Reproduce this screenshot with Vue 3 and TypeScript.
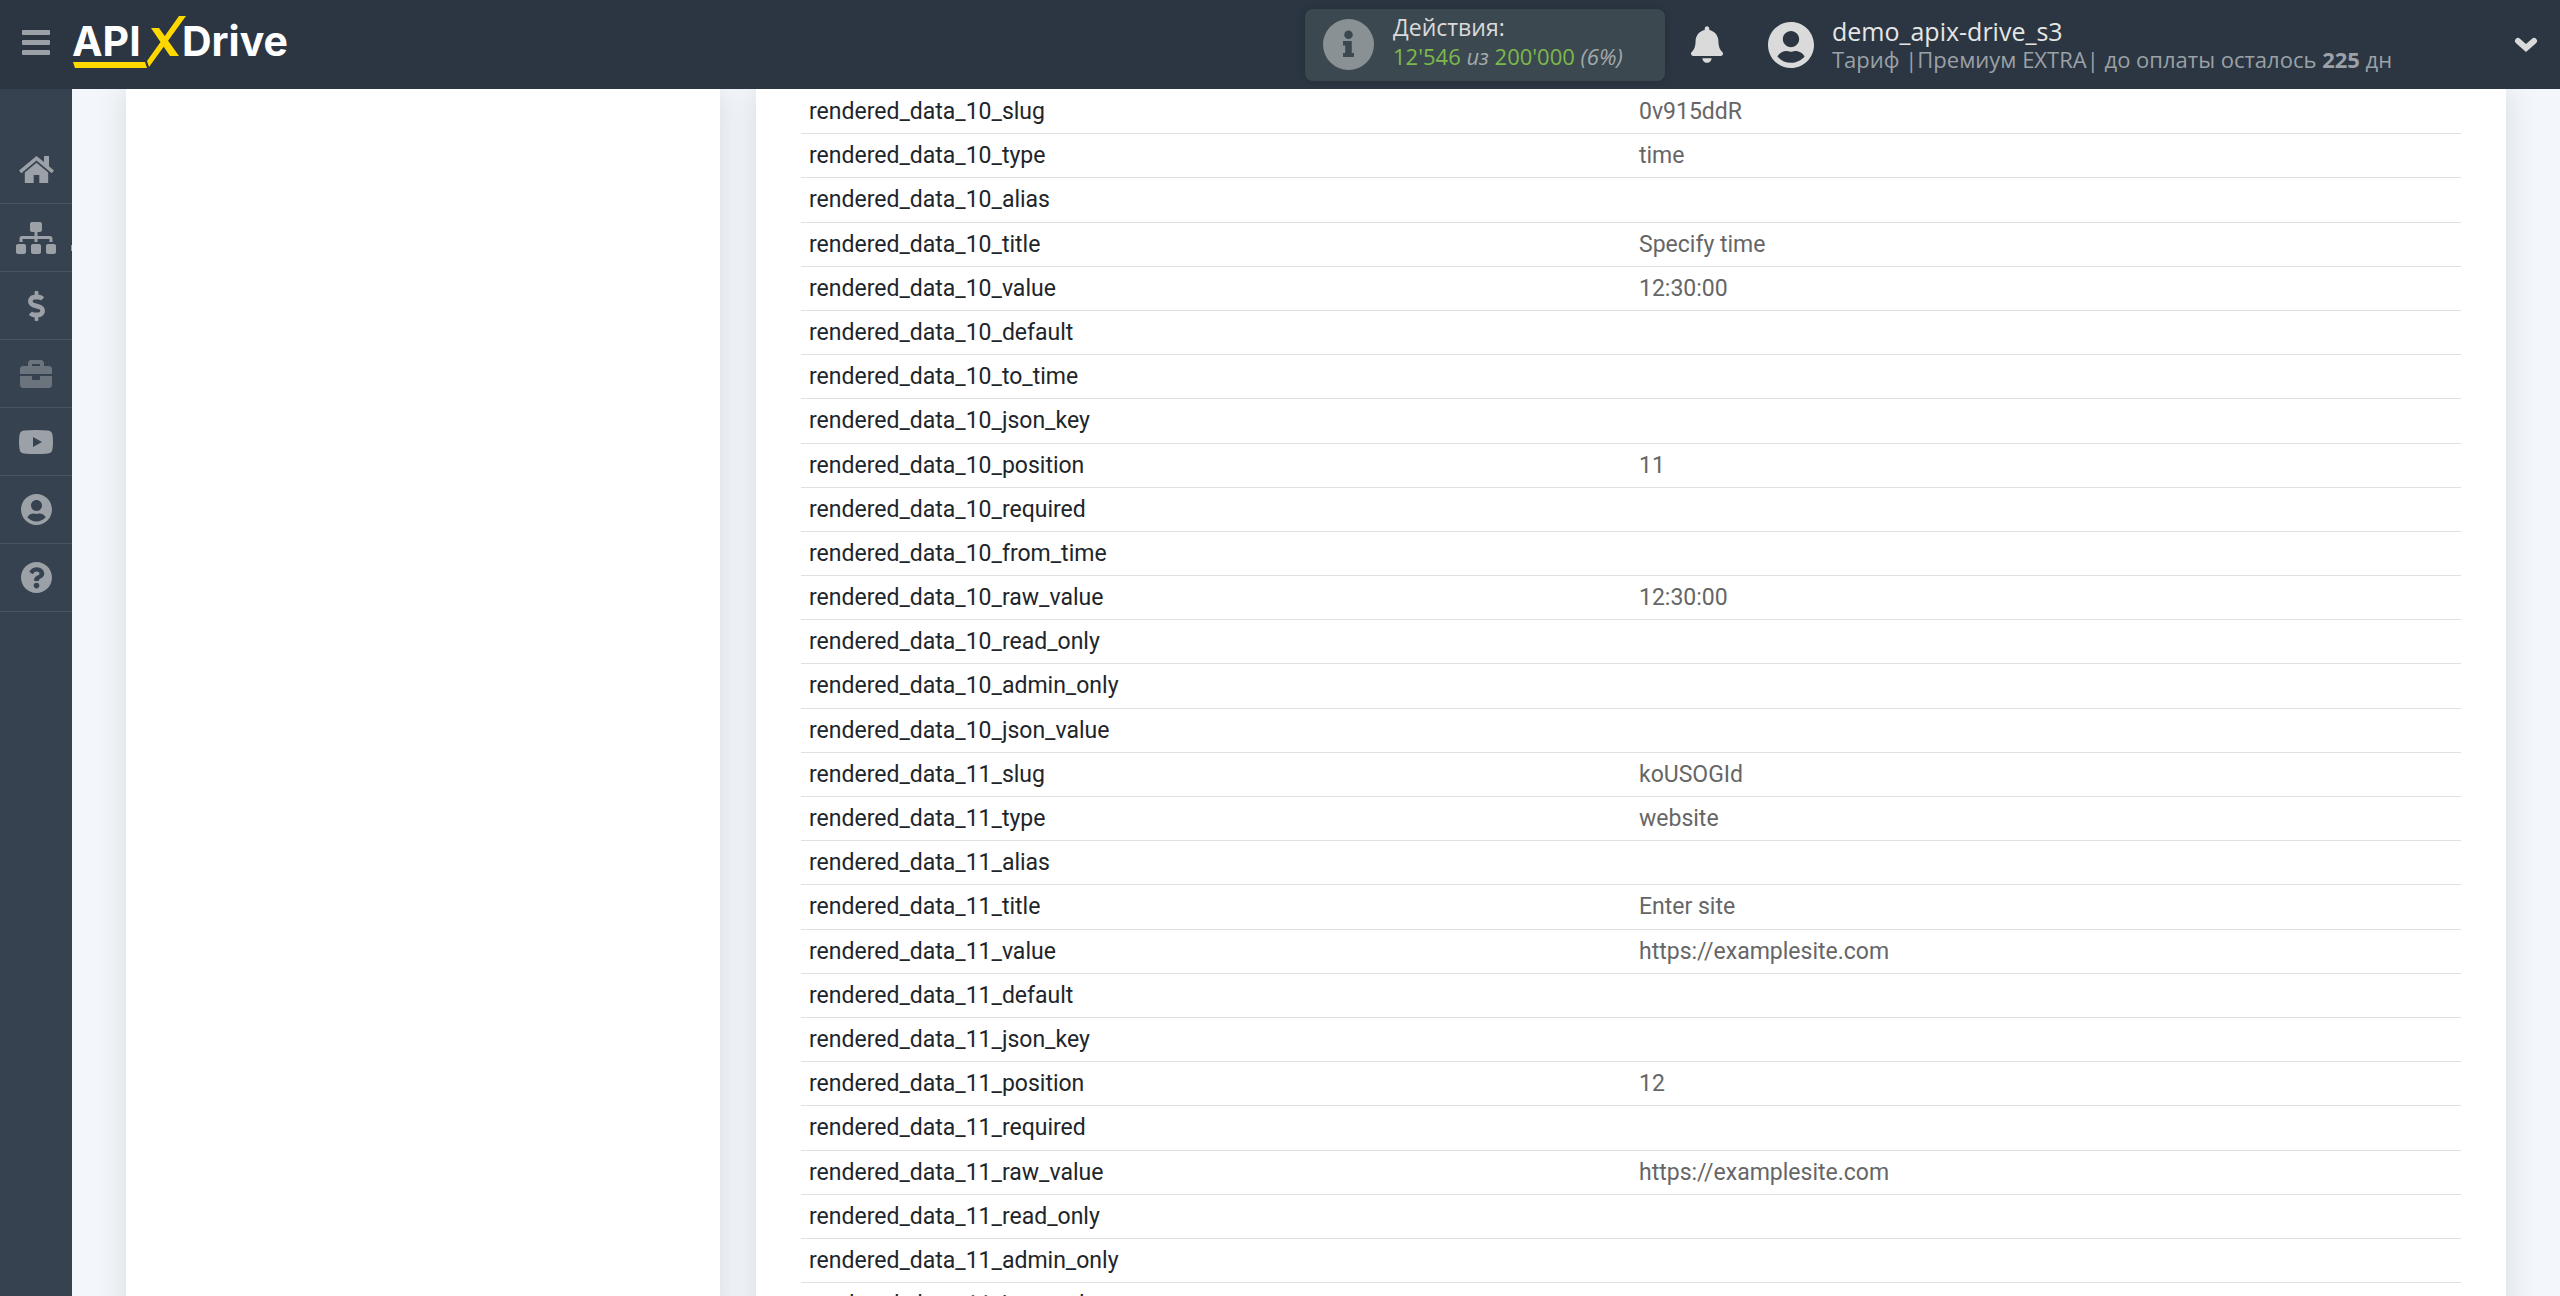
<script setup lang="ts">
interface Row {
  name: string
  value: string
}

const field = (group: number, keys: [string, string?][]): Row[] =>
  keys.map(([key, value = '']) => ({ name: `rendered_data_${group}_${key}`, value }))

const rows: Row[] = [
  ...field(10, [
    ['slug', '0v915ddR'],
    ['type', 'time'],
    ['alias'],
    ['title', 'Specify time'],
    ['value', '12:30:00'],
    ['default'],
    ['to_time'],
    ['json_key'],
    ['position', '11'],
    ['required'],
    ['from_time'],
    ['raw_value', '12:30:00'],
    ['read_only'],
    ['admin_only'],
    ['json_value'],
  ]),
  ...field(11, [
    ['slug', 'koUSOGId'],
    ['type', 'website'],
    ['alias'],
    ['title', 'Enter site'],
    ['value', 'https://examplesite.com'],
    ['default'],
    ['json_key'],
    ['position', '12'],
    ['required'],
    ['raw_value', 'https://examplesite.com'],
    ['read_only'],
    ['admin_only'],
    ['json_value'],
  ]),
]

interface NavItem {
  label: string
  box: string
  width: number
  height: number
  path: string
  dim?: boolean
  more?: boolean
}

const userPath =
  'M248 8C111 8 0 119 0 256s111 248 248 248 248-111 248-248S385 8 248 8zm0 96c48.600 0 88 39.400 88 88s-39.400 88-88 88-88-39.400-88-88 39.400-88 88-88zm0 344c-58.700 0-111.300-26.600-146.500-68.200 18.800-35.400 55.600-59.800 98.500-59.800 2.400 0 4.800.4 7.100 1.100 13 4.200 26.600 6.900 40.900 6.900 14.300 0 28-2.700 40.900-6.900 2.300-.7 4.700-1.100 7.100-1.100 42.900 0 79.700 24.400 98.500 59.800C359.300 421.400 306.700 448 248 448z'

const nav: NavItem[] = [
  {
    label: 'Главная', box: '0 0 35 27', width: 35, height: 27,
    path: 'M17.500 0 0 14.500l2.300 2.800L17.500 4.600l15.200 12.700 2.300-2.800-5-4.200V0h-5v6zM17.500 6.800 5.800 16.500V27h8.900v-8h5.600v8h8.900V16.500z',
  },
  {
    label: 'Связи', box: '0 0 640 512', width: 40, height: 32, more: true,
    path: 'M128 352H32c-17.670 0-32 14.330-32 32v96c0 17.670 14.330 32 32 32h96c17.670 0 32-14.330 32-32v-96c0-17.670-14.330-32-32-32zm-24-80h192v48h48v-48h192v48h48v-57.590c0-21.170-17.230-38.410-38.410-38.410H344v-64h40c17.670 0 32-14.330 32-32V32c0-17.670-14.330-32-32-32H256c-17.670 0-32 14.330-32 32v96c0 17.670 14.330 32 32 32h40v64H94.410C73.230 224 56 241.230 56 262.410V320h48v-48zm264 80h-96c-17.670 0-32 14.330-32 32v96c0 17.670 14.330 32 32 32h96c17.670 0 32-14.330 32-32v-96c0-17.670-14.330-32-32-32zm240 0h-96c-17.670 0-32 14.330-32 32v96c0 17.670 14.330 32 32 32h96c17.670 0 32-14.330 32-32v-96c0-17.670-14.330-32-32-32z',
  },
  {
    label: 'Оплата', box: '0 0 288 512', width: 17, height: 30,
    path: 'M209.200 233.400l-108-31.600C88.700 198.200 80 186.500 80 173.500c0-16.300 13.200-29.500 29.500-29.500h66.300c12.200 0 24.200 3.700 34.200 10.500 6.100 4.100 14.300 3.100 19.500-2l34.800-34c7.100-6.900 6.100-18.400-1.800-24.500C238 74.800 207.400 64.100 176 64V16c0-8.800-7.200-16-16-16h-32c-8.800 0-16 7.200-16 16v48h-2.500C45.800 64-5.400 118.700.5 183.600c4.200 46.100 39.400 83.600 83.800 96.600l102.500 30c12.500 3.700 21.200 15.300 21.200 28.300 0 16.300-13.200 29.500-29.500 29.500h-66.300C100 368 88 364.300 78 357.500c-6.100-4.100-14.300-3.100-19.500 2l-34.800 34c-7.100 6.900-6.100 18.400 1.800 24.500 24.500 19.200 55.100 29.900 86.500 30v48c0 8.800 7.200 16 16 16h32c8.800 0 16-7.200 16-16v-48.200c46.600-.9 90.300-28.600 105.700-72.700 21.500-61.600-14.600-124.800-72.500-141.700z',
  },
  {
    label: 'Бизнес', box: '0 0 512 512', width: 32, height: 32, dim: true,
    path: 'M320 336c0 8.840-7.160 16-16 16h-96c-8.840 0-16-7.160-16-16v-48H0v144c0 25.600 22.400 48 48 48h416c25.600 0 48-22.400 48-48V288H320v48zm144-208h-80V80c0-25.600-22.400-48-48-48H176c-25.600 0-48 22.400-48 48v48H48c-25.600 0-48 22.400-48 48v80h512v-80c0-25.600-22.400-48-48-48zm-144 0H192V96h128v32z',
  },
  {
    label: 'Видео', box: '0 0 34 24', width: 34, height: 24,
    path: 'M5 .5Q17-.5 29 .5 33 .8 33.500 5q1 7 0 14-.5 4.200-4.500 4.500-12 1-24 0Q1 23.200.500 19q-1-7 0-14Q1 .8 5 .5zM14 7v10l9-5z',
  },
  { label: 'Профиль', box: '0 8 496 496', width: 31, height: 31, path: userPath },
  {
    label: 'Помощь', box: '0 8 496 496', width: 31, height: 31,
    path: 'M496 256c0 137-111 248-248 248S0 393 0 256 111 8 248 8s248 111 248 248zM255.700 90c-54.500 0-89.200 23-116.500 63.800-3.500 5.300-2.400 12.400 2.700 16.300l34.700 26.300c5.200 3.900 12.600 3 16.700-2.100 17.900-22.700 30.100-35.800 57.300-35.800 20.400 0 45.700 13.100 45.700 33 0 15-12.400 22.700-32.500 34C240.300 238.600 209 255 209 296v4c0 6.600 5.400 12 12 12h56c6.600 0 12-5.400 12-12v-1.300c0-28.500 83.200-29.600 83.200-106.700 0-58-60.200-102-116.500-102zM248 338c-25.400 0-46 20.600-46 46s20.600 46 46 46 46-20.600 46-46-20.600-46-46-46z',
  },
]
</script>

<template>
  <div class="app">
    <header class="topbar">
      <button class="menu" type="button" aria-label="Меню"><i></i><i></i><i></i></button>
      <a class="logo" href="#" aria-label="APIXDrive">
        <svg width="224" height="56" viewBox="0 0 224 56">
          <g fill="#fff" font-family="Inter, sans-serif" font-weight="700" font-size="41">
            <text x="0" y="41">API</text>
            <text x="110" y="41">Drive</text>
          </g>
          <path fill="#ffd800" d="M1 47h72l2 6H3zM107 1h7L77 52l-2-6zM79 13h8l20 28h-9z" />
        </svg>
      </a>

      <div class="usage">
        <svg width="51" height="51" viewBox="0 0 51 51">
          <path fill="#899195" fill-rule="evenodd" d="M25.500 0a25.500 25.500 0 1 1 0 51 25.500 25.500 0 0 1 0-51zm0 11.500a4.300 4.300 0 1 0 0 8.600 4.300 4.300 0 0 0 0-8.600zM20 22v4.500h2.200V34H20v4h11v-4h-2.200V22z" />
        </svg>
        <div class="usage-text">
          <span class="usage-title">Действия:</span>
          <span class="usage-count"><b>12'546</b> <em>из</em> <b>200'000</b> <em>(6%)</em></span>
        </div>
      </div>

      <button class="bell" type="button" aria-label="Уведомления">
        <svg width="32" height="37" viewBox="0 0 448 512">
          <path fill="currentColor" d="M224 512c35.300 0 63.900-28.700 63.900-64H160.100c0 35.300 28.600 64 63.900 64zm215.400-149.700c-19.300-20.800-55.500-52-55.500-154.300 0-77.700-54.500-139.900-127.900-155.200V32c0-17.700-14.300-32-32-32s-32 14.300-32 32v20.800C118.600 68.100 64.100 130.300 64.100 208c0 102.300-36.200 133.500-55.500 154.300-6 6.400-8.700 14.100-8.600 21.700.1 16.400 13 32 32.100 32h383.800c19.100 0 32-15.600 32.100-32 .1-7.600-2.600-15.300-8.600-21.700z" />
        </svg>
      </button>

      <button class="account" type="button">
        <svg width="46" height="46" viewBox="0 8 496 496"><path fill="currentColor" :d="userPath" /></svg>
        <span class="account-text">
          <span class="account-name">demo_apix-drive_s3</span>
          <span class="account-plan">Тариф |Премиум EXTRA| до оплаты осталось <b>225</b> дн</span>
        </span>
        <svg class="chevron" width="24" height="16" viewBox="0 0 24 16">
          <path fill="none" stroke="currentColor" stroke-width="6" stroke-linecap="round" d="m4 4 8 7 8-7" />
        </svg>
      </button>
    </header>

    <div class="body">
      <nav class="sidebar">
        <a v-for="item in nav" :key="item.label" href="#" :aria-label="item.label" :class="{ dim: item.dim, more: item.more }">
          <svg :width="item.width" :height="item.height" :viewBox="item.box">
            <path fill="currentColor" fill-rule="evenodd" :d="item.path" />
          </svg>
        </a>
      </nav>

      <main class="content">
        <aside class="panel"></aside>
        <section class="panel data">
          <table>
            <tbody>
              <tr v-for="row in rows" :key="row.name">
                <th scope="row">{{ row.name }}</th>
                <td>{{ row.value }}</td>
              </tr>
            </tbody>
          </table>
        </section>
      </main>
    </div>
  </div>
</template>

<style>
body {
  margin: 0;
}
</style>

<style scoped>
.app {
  display: flex;
  flex-direction: column;
  height: 100vh;
  overflow: hidden;
  background: #f3f6fb;
  font-family: "Open Sans", "Noto Sans", sans-serif;
}

button {
  padding: 0;
  border: 0;
  background: none;
  color: inherit;
  font: inherit;
  text-align: left;
}

svg {
  display: block;
  flex: none;
}

.topbar {
  display: flex;
  align-items: center;
  flex: none;
  height: 89px;
  background: #2b3642;
  color: #dadada;
}

.menu {
  display: flex;
  flex-direction: column;
  gap: 5px;
  margin: 0 22px;
  padding-bottom: 5px;
}

.menu i {
  width: 28px;
  height: 5px;
  border-radius: 1px;
  background: #9ba1a6;
}

.logo {
  padding-bottom: 3px;
}

.usage {
  display: flex;
  align-items: center;
  gap: 19px;
  box-sizing: border-box;
  width: 360px;
  height: 72px;
  margin-left: auto;
  padding-left: 18px;
  border-radius: 8px;
  background: #3c4850;
  box-shadow: 0 0 8px rgba(0, 0, 0, 0.15);
}

.usage-text {
  display: flex;
  flex-direction: column;
  padding-bottom: 6px;
  line-height: 29px;
  white-space: nowrap;
}

.usage-title {
  font-size: 23px;
}

.usage-count {
  font-size: 22px;
}

.usage-count b {
  color: #7cb84c;
  font-weight: 400;
}

.usage-count em {
  color: #a3a8ab;
}

.bell {
  margin: 0 45px 0 26px;
}

.account {
  display: flex;
  align-items: center;
  gap: 18px;
  box-sizing: border-box;
  width: 792px;
  padding-right: 22px;
}

.account-text {
  display: flex;
  flex-direction: column;
  line-height: 28px;
  white-space: nowrap;
}

.account-name {
  color: #e6e6e6;
  font-size: 25px;
}

.account-plan {
  color: #9ba1a6;
  font-size: 22px;
}

.chevron {
  margin-left: auto;
}

.body {
  display: flex;
  flex: 1;
  min-height: 0;
}

.sidebar {
  flex: none;
  width: 72px;
  padding-top: 47px;
  background: #36424f;
}

.sidebar a {
  display: flex;
  align-items: center;
  justify-content: center;
  position: relative;
  height: 67px;
  border-bottom: 1px solid #4a5560;
  color: #9ba1a6;
}

.sidebar a.dim {
  color: #6b747d;
}

.sidebar a.more::after {
  content: "";
  position: absolute;
  right: 0;
  bottom: 20px;
  width: 1px;
  height: 6px;
  background: #9ba1a6;
}

.content {
  display: grid;
  grid-template-columns: 297fr 875fr;
  gap: 36px;
  flex: 1;
  min-width: 0;
  padding: 0 54px;
  overflow: hidden;
}

.panel {
  background: #fff;
  box-shadow: 0 0 30px rgba(0, 0, 0, 0.12);
}

.data {
  padding: 1px 45px 0;
}

table {
  width: 100%;
  border-collapse: separate;
  border-spacing: 0;
  table-layout: fixed;
  font-family: Roboto, sans-serif;
  font-size: 23px;
  line-height: 1.4;
}

th,
td {
  padding: 6px 8px 5px;
  border-bottom: 1px solid #dee0e2;
  color: #212529;
  font-weight: 400;
  text-align: left;
}

td {
  color: #666;
}
</style>
